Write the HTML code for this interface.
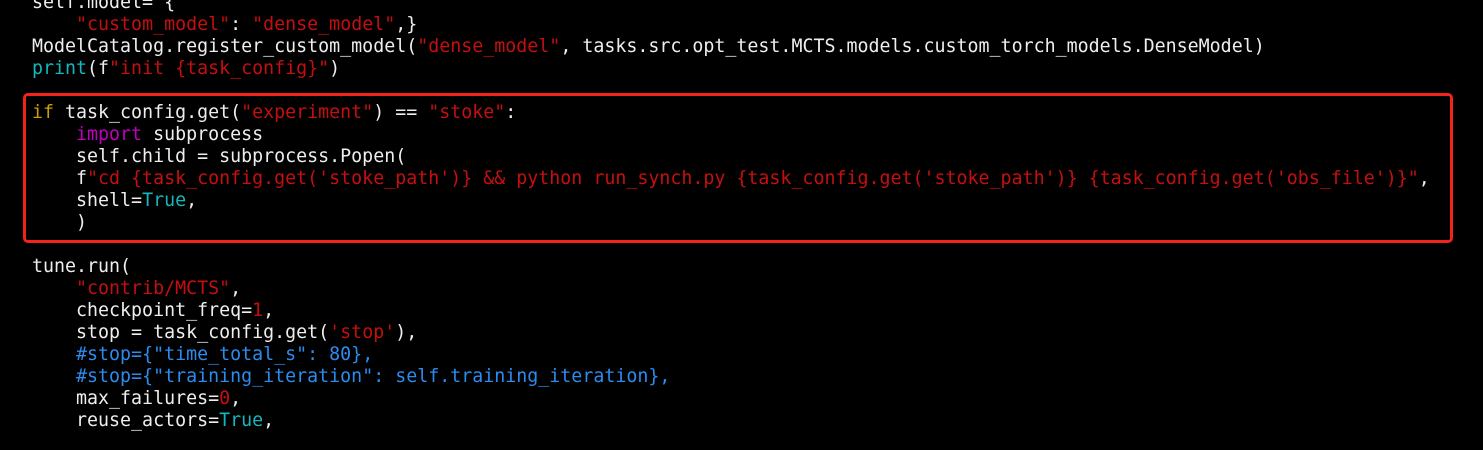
<!DOCTYPE html><html><head><style>
body{margin:0;background:#000;width:1483px;height:450px;overflow:hidden;position:relative}
pre{margin:0;position:absolute;left:32px;top:-8px;font-family:"DejaVu Sans Mono","Liberation Mono",monospace;font-size:18.3px;line-height:22px;color:#eeeeee}
.r{color:#c50f0f}.c{color:#13b8bd}.p{color:#c000c0}.y{color:#c4a000}.b{color:#2b8cf0}
.box{position:absolute;left:23px;top:93px;width:1424px;height:144px;border:3px solid #f5221b;border-radius:5px}
</style></head><body>
<pre>self.model= {
    <span class="r">"custom_model"</span>: <span class="r">"dense_model"</span>,}
ModelCatalog.register_custom_model(<span class="r">"dense_model"</span>, tasks.src.opt_test.MCTS.models.custom_torch_models.DenseModel)
<span class="c">print</span>(f<span class="r">"init {task_config}"</span>)

<span class="y">if</span> task_config.get(<span class="r">"experiment"</span>) == <span class="r">"stoke"</span>:
    <span class="p">import</span> subprocess
    self.child = subprocess.Popen(
    f<span class="r">"cd {task_config.get('stoke_path')} &amp;&amp; python run_synch.py {task_config.get('stoke_path')} {task_config.get('obs_file')}"</span>,
    shell=<span class="c">True</span>,
    )

tune.run(
    <span class="r">"contrib/MCTS"</span>,
    checkpoint_freq=<span class="r">1</span>,
    stop = task_config.get(<span class="r">'stop'</span>),
    <span class="b">#stop={"time_total_s": 80},</span>
    <span class="b">#stop={"training_iteration": self.training_iteration},</span>
    max_failures=<span class="r">0</span>,
    reuse_actors=<span class="c">True</span>,
</pre>
<div class="box"></div>
</body></html>
